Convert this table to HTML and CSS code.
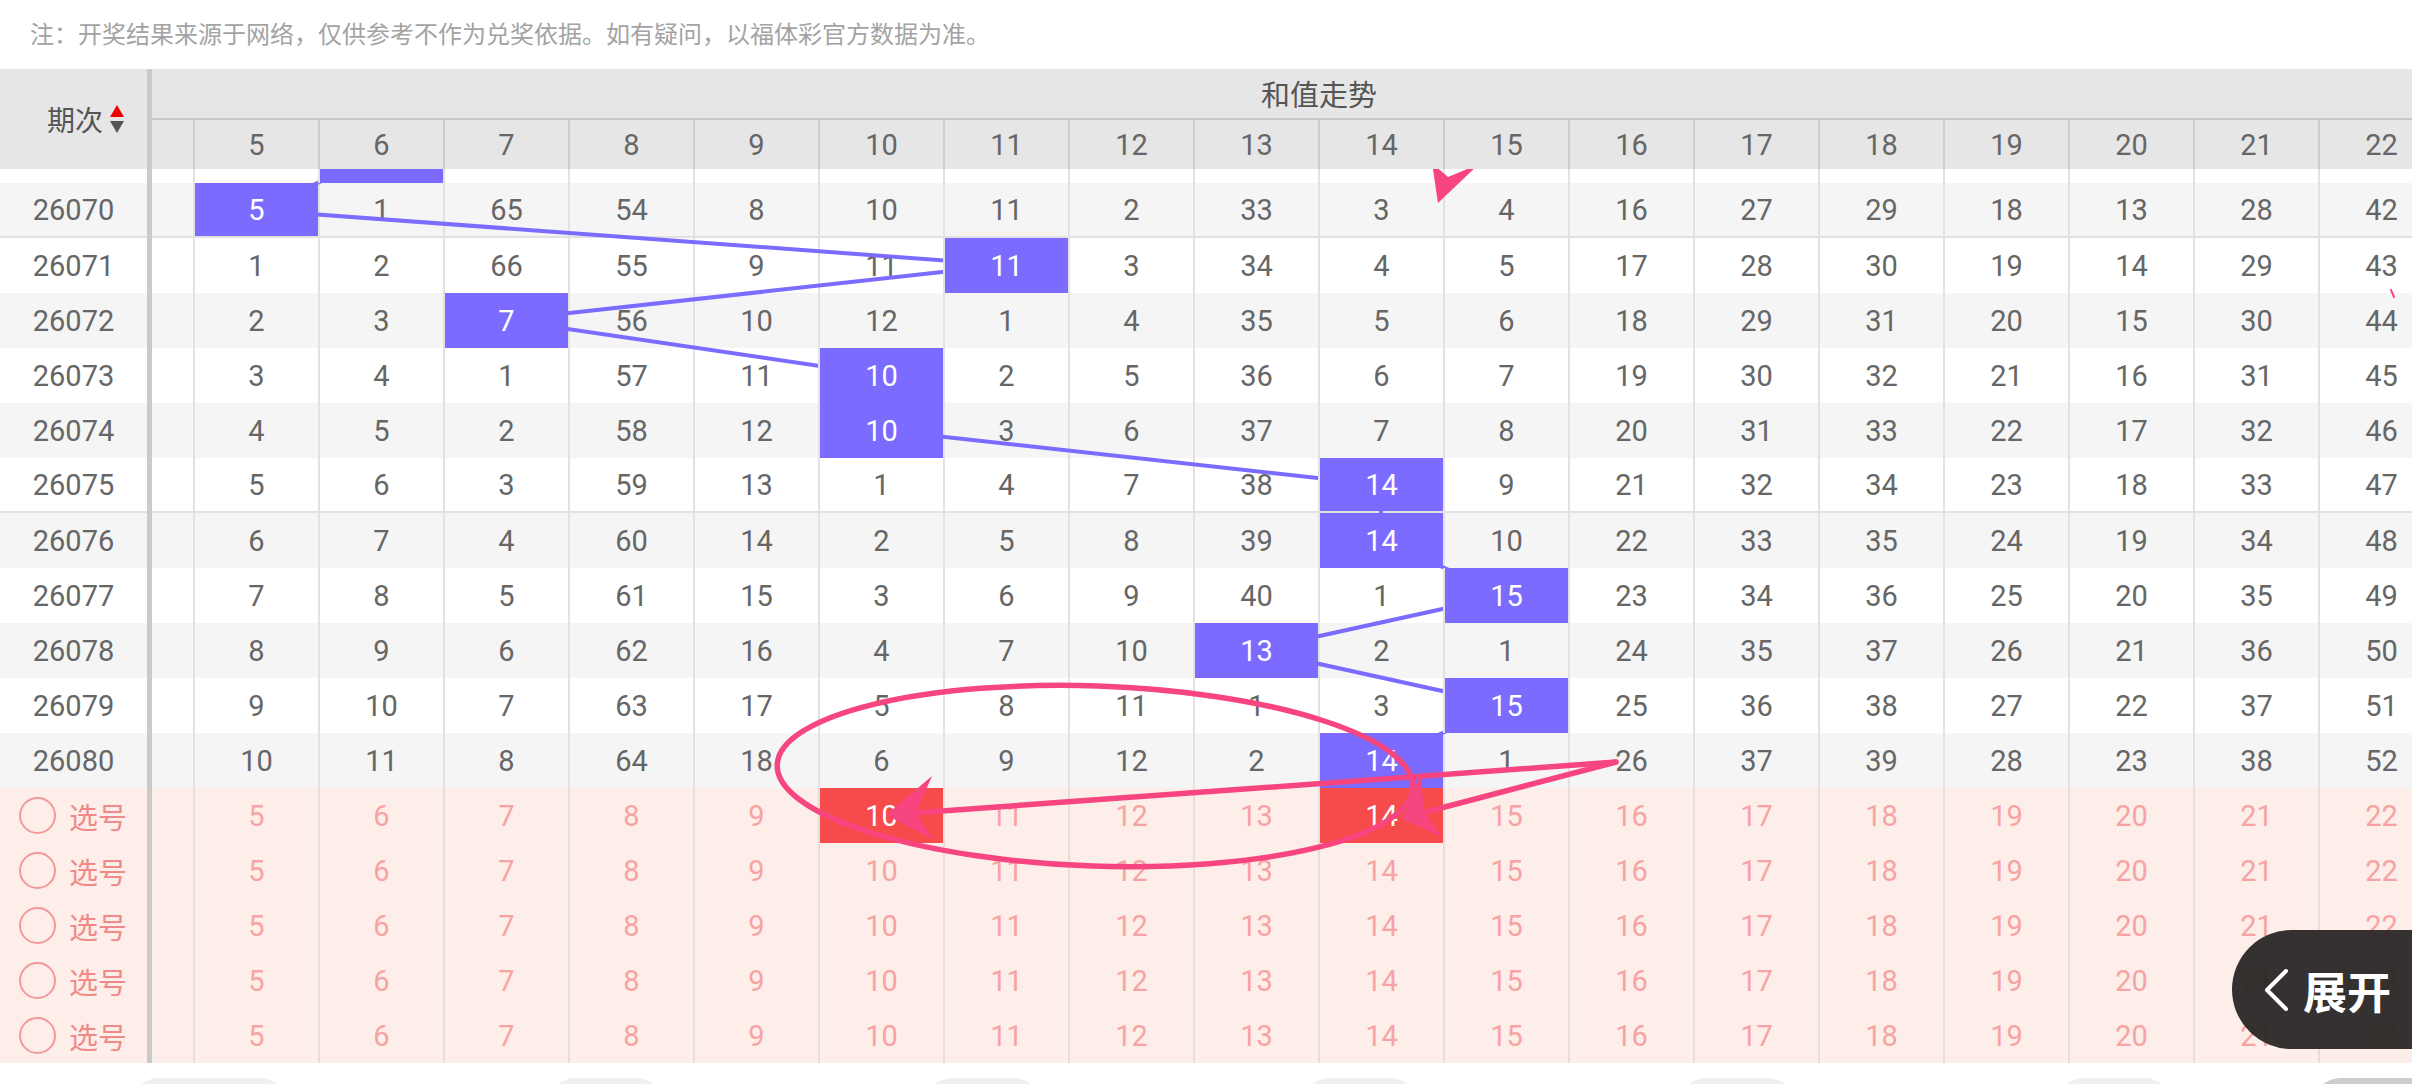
FILE: index.html
```html
<!DOCTYPE html>
<html lang="zh">
<head>
<meta charset="utf-8">
<title>和值走势</title>
<link rel="stylesheet" href="styles.css">
</head>
<body>
<div class="note">注：开奖结果来源于网络，仅供参考不作为兑奖依据。如有疑问，以福体彩官方数据为准。</div>

<div class="board">
  <div class="left">
    <div class="lhead">期次<svg class="sort" width="14" height="28" viewBox="0 0 14 28"><path d="M7 0 L14 12 L0 12 Z" fill="#f00000"/><path d="M0 16 L14 16 L7 28 Z" fill="#555"/></svg></div>
    <div class="lpart"></div>
    <div class="lrow alt sep">26070</div>
    <div class="lrow">26071</div>
    <div class="lrow alt">26072</div>
    <div class="lrow">26073</div>
    <div class="lrow alt">26074</div>
    <div class="lrow sep">26075</div>
    <div class="lrow alt">26076</div>
    <div class="lrow">26077</div>
    <div class="lrow alt">26078</div>
    <div class="lrow">26079</div>
    <div class="lrow alt">26080</div>
    <div class="lrow pick"><span class="circle"></span>选号</div>
    <div class="lrow pick"><span class="circle"></span>选号</div>
    <div class="lrow pick"><span class="circle"></span>选号</div>
    <div class="lrow pick"><span class="circle"></span>选号</div>
    <div class="lrow pick"><span class="circle"></span>选号</div>
  </div>
  <div class="divider"></div>
  <div class="trend">
    <div class="thead">
      <div class="ttitle">和值走势</div>
      <div class="tnums"><span class="pad"></span><span class="c">5</span><span class="c">6</span><span class="c">7</span><span class="c">8</span><span class="c">9</span><span class="c">10</span><span class="c">11</span><span class="c">12</span><span class="c">13</span><span class="c">14</span><span class="c">15</span><span class="c">16</span><span class="c">17</span><span class="c">18</span><span class="c">19</span><span class="c">20</span><span class="c">21</span><span class="c">22</span></div>
    </div>
    <div class="row partial"><span class="pad"></span><span class="c"></span><span class="c on"></span><span class="c"></span><span class="c"></span><span class="c"></span><span class="c"></span><span class="c"></span><span class="c"></span><span class="c"></span><span class="c"></span><span class="c"></span><span class="c"></span><span class="c"></span><span class="c"></span><span class="c"></span><span class="c"></span><span class="c"></span><span class="c"></span></div>
    <div class="row alt sep"><span class="pad"></span><span class="c on">5</span><span class="c">1</span><span class="c">65</span><span class="c">54</span><span class="c">8</span><span class="c">10</span><span class="c">11</span><span class="c">2</span><span class="c">33</span><span class="c">3</span><span class="c">4</span><span class="c">16</span><span class="c">27</span><span class="c">29</span><span class="c">18</span><span class="c">13</span><span class="c">28</span><span class="c">42</span></div>
    <div class="row"><span class="pad"></span><span class="c">1</span><span class="c">2</span><span class="c">66</span><span class="c">55</span><span class="c">9</span><span class="c">11</span><span class="c on">11</span><span class="c">3</span><span class="c">34</span><span class="c">4</span><span class="c">5</span><span class="c">17</span><span class="c">28</span><span class="c">30</span><span class="c">19</span><span class="c">14</span><span class="c">29</span><span class="c">43</span></div>
    <div class="row alt"><span class="pad"></span><span class="c">2</span><span class="c">3</span><span class="c on">7</span><span class="c">56</span><span class="c">10</span><span class="c">12</span><span class="c">1</span><span class="c">4</span><span class="c">35</span><span class="c">5</span><span class="c">6</span><span class="c">18</span><span class="c">29</span><span class="c">31</span><span class="c">20</span><span class="c">15</span><span class="c">30</span><span class="c">44</span></div>
    <div class="row"><span class="pad"></span><span class="c">3</span><span class="c">4</span><span class="c">1</span><span class="c">57</span><span class="c">11</span><span class="c on">10</span><span class="c">2</span><span class="c">5</span><span class="c">36</span><span class="c">6</span><span class="c">7</span><span class="c">19</span><span class="c">30</span><span class="c">32</span><span class="c">21</span><span class="c">16</span><span class="c">31</span><span class="c">45</span></div>
    <div class="row alt"><span class="pad"></span><span class="c">4</span><span class="c">5</span><span class="c">2</span><span class="c">58</span><span class="c">12</span><span class="c on">10</span><span class="c">3</span><span class="c">6</span><span class="c">37</span><span class="c">7</span><span class="c">8</span><span class="c">20</span><span class="c">31</span><span class="c">33</span><span class="c">22</span><span class="c">17</span><span class="c">32</span><span class="c">46</span></div>
    <div class="row sep"><span class="pad"></span><span class="c">5</span><span class="c">6</span><span class="c">3</span><span class="c">59</span><span class="c">13</span><span class="c">1</span><span class="c">4</span><span class="c">7</span><span class="c">38</span><span class="c on">14</span><span class="c">9</span><span class="c">21</span><span class="c">32</span><span class="c">34</span><span class="c">23</span><span class="c">18</span><span class="c">33</span><span class="c">47</span></div>
    <div class="row alt"><span class="pad"></span><span class="c">6</span><span class="c">7</span><span class="c">4</span><span class="c">60</span><span class="c">14</span><span class="c">2</span><span class="c">5</span><span class="c">8</span><span class="c">39</span><span class="c on">14</span><span class="c">10</span><span class="c">22</span><span class="c">33</span><span class="c">35</span><span class="c">24</span><span class="c">19</span><span class="c">34</span><span class="c">48</span></div>
    <div class="row"><span class="pad"></span><span class="c">7</span><span class="c">8</span><span class="c">5</span><span class="c">61</span><span class="c">15</span><span class="c">3</span><span class="c">6</span><span class="c">9</span><span class="c">40</span><span class="c">1</span><span class="c on">15</span><span class="c">23</span><span class="c">34</span><span class="c">36</span><span class="c">25</span><span class="c">20</span><span class="c">35</span><span class="c">49</span></div>
    <div class="row alt"><span class="pad"></span><span class="c">8</span><span class="c">9</span><span class="c">6</span><span class="c">62</span><span class="c">16</span><span class="c">4</span><span class="c">7</span><span class="c">10</span><span class="c on">13</span><span class="c">2</span><span class="c">1</span><span class="c">24</span><span class="c">35</span><span class="c">37</span><span class="c">26</span><span class="c">21</span><span class="c">36</span><span class="c">50</span></div>
    <div class="row"><span class="pad"></span><span class="c">9</span><span class="c">10</span><span class="c">7</span><span class="c">63</span><span class="c">17</span><span class="c">5</span><span class="c">8</span><span class="c">11</span><span class="c">1</span><span class="c">3</span><span class="c on">15</span><span class="c">25</span><span class="c">36</span><span class="c">38</span><span class="c">27</span><span class="c">22</span><span class="c">37</span><span class="c">51</span></div>
    <div class="row alt"><span class="pad"></span><span class="c">10</span><span class="c">11</span><span class="c">8</span><span class="c">64</span><span class="c">18</span><span class="c">6</span><span class="c">9</span><span class="c">12</span><span class="c">2</span><span class="c on">14</span><span class="c">1</span><span class="c">26</span><span class="c">37</span><span class="c">39</span><span class="c">28</span><span class="c">23</span><span class="c">38</span><span class="c">52</span></div>
    <div class="row pick"><span class="pad"></span><span class="c">5</span><span class="c">6</span><span class="c">7</span><span class="c">8</span><span class="c">9</span><span class="c red">10</span><span class="c">11</span><span class="c">12</span><span class="c">13</span><span class="c red">14</span><span class="c">15</span><span class="c">16</span><span class="c">17</span><span class="c">18</span><span class="c">19</span><span class="c">20</span><span class="c">21</span><span class="c">22</span></div>
    <div class="row pick"><span class="pad"></span><span class="c">5</span><span class="c">6</span><span class="c">7</span><span class="c">8</span><span class="c">9</span><span class="c">10</span><span class="c">11</span><span class="c">12</span><span class="c">13</span><span class="c">14</span><span class="c">15</span><span class="c">16</span><span class="c">17</span><span class="c">18</span><span class="c">19</span><span class="c">20</span><span class="c">21</span><span class="c">22</span></div>
    <div class="row pick"><span class="pad"></span><span class="c">5</span><span class="c">6</span><span class="c">7</span><span class="c">8</span><span class="c">9</span><span class="c">10</span><span class="c">11</span><span class="c">12</span><span class="c">13</span><span class="c">14</span><span class="c">15</span><span class="c">16</span><span class="c">17</span><span class="c">18</span><span class="c">19</span><span class="c">20</span><span class="c">21</span><span class="c">22</span></div>
    <div class="row pick"><span class="pad"></span><span class="c">5</span><span class="c">6</span><span class="c">7</span><span class="c">8</span><span class="c">9</span><span class="c">10</span><span class="c">11</span><span class="c">12</span><span class="c">13</span><span class="c">14</span><span class="c">15</span><span class="c">16</span><span class="c">17</span><span class="c">18</span><span class="c">19</span><span class="c">20</span><span class="c">21</span><span class="c">22</span></div>
    <div class="row pick"><span class="pad"></span><span class="c">5</span><span class="c">6</span><span class="c">7</span><span class="c">8</span><span class="c">9</span><span class="c">10</span><span class="c">11</span><span class="c">12</span><span class="c">13</span><span class="c">14</span><span class="c">15</span><span class="c">16</span><span class="c">17</span><span class="c">18</span><span class="c">19</span><span class="c">20</span><span class="c">21</span><span class="c">22</span></div>
  </div>
</div>

<div class="tabs">
  <span class="tab first"></span><span class="tab"></span><span class="tab"></span><span class="tab"></span><span class="tab"></span><span class="tab"></span><span class="tab last"></span>
</div>

<svg class="links" width="2412" height="1084" viewBox="0 0 2412 1084">
  <polyline points="381,155 256,210 1006,265 506,320 881,375 881,430 1381,485 1381,540 1506,595 1256,650 1506,705 1381,760" fill="none" stroke="#7b6bff" stroke-width="4"/>
</svg>

<svg class="annot" width="2412" height="1084" viewBox="0 0 2412 1084">
  <g fill="none" stroke="#f7457f" stroke-width="5.5" stroke-linecap="round">
    <ellipse cx="1095" cy="776" rx="318" ry="90" transform="rotate(2 1095 776)"/>
    <line x1="1616" y1="762" x2="914" y2="813"/>
    <line x1="1616" y1="762" x2="1422" y2="813"/>
    <line x1="2391" y1="290" x2="2394" y2="297" stroke-width="2"/>
  </g>
  <g fill="#f7457f">
    <path d="M886 815 L932 776 L916 813 L934 840 Z"/>
    <path d="M1402 819 L1421 773 L1424 812 L1442 837 Z"/>
    <path d="M1438 203 L1432 163 L1448 177 L1479 164 Z"/>
  </g>
</svg>

<div class="expand"><svg class="chev" width="26" height="42" viewBox="0 0 26 42"><path d="M23 2 L4 21 L23 40" fill="none" stroke="#fff" stroke-width="4" stroke-linecap="round" stroke-linejoin="round"/></svg><span>展开</span></div>
</body>
</html>
```

FILE: styles.css
```css
html, body {
  margin: 0;
  padding: 0;
  width: 2412px;
  height: 1084px;
  overflow: hidden;
  background: #ffffff;
}

body {
  position: relative;
  font-family: Roboto, "Noto Sans CJK SC", sans-serif;
  color: #666666;
}

.note {
  height: 69px;
  box-sizing: border-box;
  padding: 0 0 5px 30px;
  display: flex;
  align-items: center;
  font-family: "Noto Sans CJK SC", sans-serif;
  font-size: 24px;
  color: #a3a3a3;
}

.board {
  display: flex;
  height: 994px;
}

.left {
  width: 147px;
  flex: none;
}

.divider {
  width: 5px;
  flex: none;
  background: #cacaca;
  position: relative;
  z-index: 5;
}

.trend {
  flex: none;
  width: 2291px;
}

/* header */
.lhead {
  position: relative;
  z-index: 5;
  height: 100px;
  box-sizing: border-box;
  padding-left: 47px;
  display: flex;
  align-items: center;
  gap: 7px;
  background: #e6e6e6;
  font-family: "Noto Sans CJK SC", sans-serif;
  font-size: 28px;
  color: #555555;
}

.sort {
  display: block;
}

.thead {
  position: relative;
  z-index: 5;
  background: #e6e6e6;
}

.ttitle {
  height: 51px;
  box-sizing: border-box;
  border-bottom: 2px solid #c8c8c8;
  padding-left: 1109px;
  line-height: 48px;
  font-family: "Noto Sans CJK SC", sans-serif;
  font-size: 29px;
  color: #555555;
}

.tnums {
  display: flex;
  height: 49px;
}

.pad {
  width: 41px;
  flex: none;
}

.c {
  width: 125px;
  flex: none;
  box-sizing: border-box;
  border-left: 2px solid #e2e2e2;
  display: flex;
  align-items: center;
  justify-content: center;
  font-size: 29px;
}

.tnums .c {
  border-left-color: #cdcdcd;
}

/* left rows */
.lpart {
  height: 14px;
}

.lrow {
  height: 55px;
  box-sizing: border-box;
  display: flex;
  align-items: center;
  justify-content: center;
  font-size: 29px;
  color: #666666;
}

.alt {
  background: #f5f5f5;
}

.sep {
  border-bottom: 2px solid #e2e2e2;
}

.lrow.pick {
  background: #fdeee9;
  color: #f08a8a;
  gap: 13px;
  font-family: "Noto Sans CJK SC", sans-serif;
  font-size: 29px;
  justify-content: flex-start;
  padding-left: 19px;
}

.circle {
  width: 37px;
  height: 37px;
  box-sizing: border-box;
  border: 2px solid #f29a9a;
  border-radius: 50%;
  flex: none;
}

/* trend rows */
.row {
  display: flex;
  height: 55px;
  box-sizing: border-box;
}

.row.partial {
  height: 14px;
}

.row.pick {
  background: #fdeee9;
  color: #f7a3a3;
}

.row.pick .c {
  border-left-color: #e6dedc;
}

.c.on {
  position: relative;
  z-index: 2;
  background: #7b6bff;
  color: #ffffff;
}

.c.red {
  background: #f54b4b;
  color: #ffffff;
}

/* bottom tabs */
.tabs {
  height: 21px;
  box-sizing: border-box;
  padding-top: 15px;
  overflow: hidden;
  display: flex;
  align-items: flex-start;
}

.tab {
  flex: none;
  width: 120px;
  height: 60px;
  border-radius: 30px;
  background: #eff0f2;
  margin-left: 257px;
}

.tab.first {
  width: 160px;
  margin-left: 129px;
}

.tab.last {
  width: 200px;
  margin-left: 137px;
  background: #cdcdcd;
}

/* overlays */
.links {
  position: absolute;
  left: 0;
  top: 0;
  z-index: 1;
  pointer-events: none;
}

.annot {
  position: absolute;
  left: 0;
  top: 0;
  z-index: 3;
  pointer-events: none;
}

.expand {
  position: absolute;
  left: 2232px;
  top: 930px;
  z-index: 6;
  width: 180px;
  height: 119px;
  box-sizing: border-box;
  padding-left: 31px;
  display: flex;
  align-items: center;
  gap: 14px;
  border-radius: 60px 0 0 60px;
  background: rgba(38, 34, 34, 0.93);
  color: #ffffff;
  font-family: "Noto Sans CJK SC", sans-serif;
  font-weight: 700;
  font-size: 44px;
}

.chev {
  display: block;
  flex: none;
}
```
